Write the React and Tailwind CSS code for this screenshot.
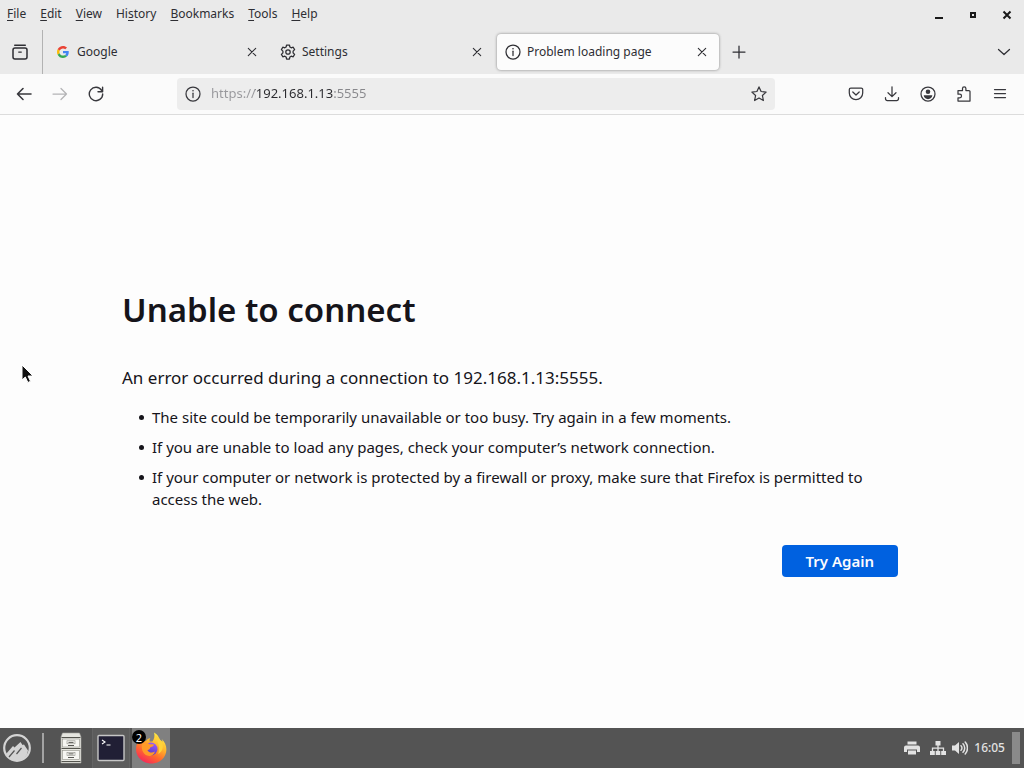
import React, { useState } from "react";

const MENUS = [
    { before: "", key: "F", after: "ile" },
    { before: "", key: "E", after: "dit" },
    { before: "", key: "V", after: "iew" },
    { before: "Hi", key: "s", after: "tory" },
    { before: "", key: "B", after: "ookmarks" },
    { before: "", key: "T", after: "ools" },
    { before: "", key: "H", after: "elp" },
];

const HINTS = [
    "The site could be temporarily unavailable or too busy. Try again in a few moments.",
    "If you are unable to load any pages, check your computer’s network connection.",
    "If your computer or network is protected by a firewall or proxy, make sure that Firefox is permitted to access the web.",
];

// Line icon on a 16px grid
function Icon({ children, className = "size-4" }) {
    return (
        <svg
            viewBox="0 0 16 16"
            className={`${className} shrink-0`}
            fill="none"
            stroke="currentColor"
            strokeWidth="1.25"
            strokeLinecap="round"
            strokeLinejoin="round"
            aria-hidden="true"
        >
            {children}
        </svg>
    );
}

const InfoIcon = () => (
    <Icon>
        <circle cx="8" cy="8" r="7" />
        <path d="M8 7.2v4.3" />
        <circle cx="8" cy="4.7" r=".8" fill="currentColor" stroke="none" />
    </Icon>
);

const GearIcon = () => (
    <Icon>
        <circle cx="8" cy="8" r="2.2" />
        <path d="M6.6 1h2.8l.5 2 1.3.8 2-.6 1.4 2.4-1.5 1.5v1.8l1.5 1.5-1.4 2.4-2-.6-1.3.8-.5 2H6.6l-.5-2-1.3-.8-2 .6-1.4-2.4 1.5-1.5V7.1L1.4 5.600l1.400-2.400 2 .600L6.100 3z" />
    </Icon>
);

const GoogleIcon = () => (
    <svg viewBox="0 0 48 48" className="size-4 shrink-0 p-0.5" aria-hidden="true">
        <path fill="#EA4335" d="M24 9.5c3.54 0 6.71 1.22 9.21 3.6l6.85-6.85C35.9 2.38 30.47 0 24 0 14.62 0 6.51 5.38 2.56 13.22l7.98 6.19C12.43 13.72 17.74 9.5 24 9.5z" />
        <path fill="#4285F4" d="M46.98 24.55c0-1.57-.15-3.09-.38-4.55H24v9.02h12.94c-.58 2.96-2.26 5.48-4.78 7.18l7.73 6c4.51-4.18 7.09-10.36 7.09-17.65z" />
        <path fill="#FBBC05" d="M10.53 28.59c-.48-1.45-.76-2.99-.76-4.59s.27-3.14.76-4.59l-7.98-6.19C.92 16.46 0 20.12 0 24s.92 7.54 2.56 10.78l7.97-6.19z" />
        <path fill="#34A853" d="M24 48c6.48 0 11.93-2.13 15.89-5.81l-7.73-6c-2.15 1.45-4.92 2.3-8.16 2.3-6.26 0-11.57-4.22-13.47-9.91l-7.98 6.19C6.51 42.62 14.62 48 24 48z" />
    </svg>
);

const CloseIcon = () => (
    <Icon>
        <path d="M4.3 4.3l7.4 7.4M11.700 4.300l-7.400 7.400" strokeWidth="1.1" />
    </Icon>
);

const TABS = [
    { title: "Google", icon: GoogleIcon },
    { title: "Settings", icon: GearIcon },
    { title: "Problem loading page", icon: InfoIcon },
];

function ToolButton({ label, disabled, children }) {
    return (
        <button
            type="button"
            aria-label={label}
            disabled={disabled}
            className="flex size-8 shrink-0 items-center justify-center rounded hover:bg-black/10 disabled:text-[#b4b4b6]"
        >
            {children}
        </button>
    );
}

function MenuBar() {
    return (
        <div className="flex h-7 items-center justify-between">
            <nav className="flex gap-3.5 pl-[7px] text-xs">
                {MENUS.map((m) => (
                    <button type="button" key={m.key + m.after}>
                        {m.before}
                        <span className="underline underline-offset-2">{m.key}</span>
                        {m.after}
                    </button>
                ))}
            </nav>
            <div className="flex gap-[18px] pr-[9px] text-[#1a1a1a]">
                <button type="button" aria-label="Minimize">
                    <svg viewBox="0 0 16 16" className="size-4">
                        <path d="M4 12h8" stroke="currentColor" strokeWidth="2" />
                    </svg>
                </button>
                <button type="button" aria-label="Maximize">
                    <svg viewBox="0 0 16 16" className="size-4">
                        <path d="M6 7h4v4H6z" fill="none" stroke="currentColor" strokeWidth="2" />
                    </svg>
                </button>
                <button type="button" aria-label="Close window">
                    <svg viewBox="0 0 16 16" className="size-4">
                        <path d="M4.500 5.500l7 7M11.500 5.500l-7 7" stroke="currentColor" strokeWidth="2" />
                    </svg>
                </button>
            </div>
        </div>
    );
}

function TabStrip() {
    const [active, setActive] = useState(2);

    return (
        <div className="flex h-[46px] items-center pt-0.5">
            <div className="flex h-11 w-[43px] shrink-0 items-center justify-center border-r border-[#b2b2b2] pr-0.5">
                <ToolButton label="Recent browsing">
                    <Icon>
                        <path d="M2.700 1.200h10.600" strokeWidth="1.400" />
                        <rect x="1" y="4" width="14" height="11" rx="2" strokeWidth="1.500" />
                        <path d="M6.700 8h2.600" />
                    </Icon>
                </ToolButton>
            </div>
            <div className="flex min-w-0 gap-[3px] pl-1">
                {TABS.map(({ title, icon: TabIcon }, i) => (
                    <div
                        key={title}
                        className={
                            i === active
                                ? "flex h-9 w-[222px] min-w-0 items-center rounded bg-[#fcfcfc] pr-[9px] pl-2 shadow-[0_0_3px_rgba(0,0,0,0.45)]"
                                : "flex h-9 w-[222px] min-w-0 items-center rounded pr-[9px] pl-2"
                        }
                    >
                        <button
                            type="button"
                            onClick={() => setActive(i)}
                            className="flex min-w-0 flex-1 items-center gap-1.5 text-left text-xs"
                        >
                            <TabIcon />
                            <span className="truncate">{title}</span>
                        </button>
                        <button type="button" aria-label={`Close ${title}`}>
                            <CloseIcon />
                        </button>
                    </div>
                ))}
            </div>
            <div className="flex flex-1 items-center justify-between pr-1 pl-1">
                <ToolButton label="New tab">
                    <Icon>
                        <path d="M8 2v12M2 8h12" />
                    </Icon>
                </ToolButton>
                <ToolButton label="List all tabs">
                    <Icon>
                        <path d="M2.500 5.500L8 10.500l5.500-5" />
                    </Icon>
                </ToolButton>
            </div>
        </div>
    );
}

function Toolbar() {
    const [url, setUrl] = useState("https://192.168.1.13:5555");

    return (
        <div className="flex h-[41px] items-center justify-between border-b border-[#dcdcdc] bg-[#fbfbfb] px-2 text-[#38383d]">
            <div className="flex gap-1">
                <ToolButton label="Back">
                    <Icon>
                        <path d="M15 8H1.500M7 2.500L1.500 8 7 13.500" strokeWidth="1.600" />
                    </Icon>
                </ToolButton>
                <ToolButton label="Forward" disabled>
                    <Icon>
                        <path d="M1 8h13.500M9 2.500L14.500 8 9 13.500" />
                    </Icon>
                </ToolButton>
                <ToolButton label="Reload">
                    <Icon>
                        <path d="M13.600 4.300A6.700 6.700 0 1 0 14.700 8M14.600 1.200v4.600H10" strokeWidth="1.400" />
                    </Icon>
                </ToolButton>
            </div>
            <form
                className="mr-[65px] ml-[65px] flex h-8 max-w-[598px] flex-1 items-center rounded bg-[#ededed] pr-2 pl-2"
                onSubmit={(e) => e.preventDefault()}
            >
                <InfoIcon />
                {/* scheme and port are dimmed, the host is dark */}
                <input
                    type="text"
                    aria-label="Address"
                    value={url}
                    onChange={(e) => setUrl(e.target.value)}
                    className="ml-2.5 min-w-0 flex-1 bg-[linear-gradient(90deg,#98989c_44px,#2a2a2e_44px,#2a2a2e_122px,#88888c_122px)] bg-clip-text text-transparent caret-black outline-none"
                />
                <button type="button" aria-label="Bookmark this page">
                    <Icon>
                        <path d="M8 .9l2.100 4.600 5 .600-3.700 3.400 1 5L8 12l-4.400 2.500 1-5L.9 6.100l5-.600z" />
                    </Icon>
                </button>
            </form>
            <div className="flex gap-1">
                <ToolButton label="Save to Pocket">
                    <Icon>
                        <path d="M2.800 2h10.400A1.500 1.500 0 0 1 14.700 3.500V7A6.700 6.700 0 0 1 1.300 7V3.500A1.500 1.500 0 0 1 2.800 2zM4.800 6L8 9l3.200-3" />
                    </Icon>
                </ToolButton>
                <ToolButton label="Downloads">
                    <Icon>
                        <path d="M8 .8v9.600M4 6.700l4 3.900 4-3.900M1.500 11.500v1.200a1.800 1.800 0 0 0 1.800 1.800h9.400a1.800 1.800 0 0 0 1.800-1.800v-1.200" />
                    </Icon>
                </ToolButton>
                <ToolButton label="Account">
                    <Icon>
                        <circle cx="8" cy="8" r="7" />
                        <circle cx="8" cy="5.700" r="2.300" fill="currentColor" stroke="none" />
                        <path d="M3.700 9.300h8.600c0 2-2 3.900-4.300 3.900S3.700 11.300 3.700 9.300z" fill="currentColor" stroke="none" />
                    </Icon>
                </ToolButton>
                <ToolButton label="Extensions">
                    <Icon>
                        <path d="M2 4.500h4.500v-2a1.700 1.700 0 0 1 3.400 0v2h3A1.100 1.100 0 0 1 14 5.600V15H2v-3.200h1.700a1.800 1.800 0 0 0 0-3.600H2z" />
                    </Icon>
                </ToolButton>
                <ToolButton label="Open application menu">
                    <Icon>
                        <path d="M2.500 3.500h11M2.500 7.500h11M2.500 11.500h11" />
                    </Icon>
                </ToolButton>
            </div>
        </div>
    );
}

function ErrorPage() {
    return (
        <main className="flex flex-1 flex-col justify-center bg-[#fdfdfd] px-12 pt-6 text-[#15141a]">
            <div className="mx-auto w-full max-w-[780px] pr-1">
                <h1 className="text-[33px] leading-10 font-semibold">Unable to connect</h1>
                <p className="mt-9 text-[17px] leading-6">
                    An error occurred during a connection to 192.168.1.13:5555.
                </p>
                <ul className="mt-4 space-y-2 pl-[17px] text-[15px] leading-[22px]">
                    {HINTS.map((hint) => (
                        <li
                            key={hint}
                            className="flex gap-2 before:mt-[9px] before:size-[5px] before:shrink-0 before:rounded-full before:bg-current before:content-['']"
                        >
                            {hint}
                        </li>
                    ))}
                </ul>
                <div className="mt-[35px] flex justify-end">
                    <button
                        type="button"
                        className="h-8 rounded bg-[#0061e0] px-6 text-[15px] font-semibold text-[#fbfbfe] hover:bg-[#0250bb]"
                    >
                        Try Again
                    </button>
                </div>
            </div>
        </main>
    );
}

const CinnamonLogo = () => (
    <svg viewBox="0 0 30 30" className="size-[30px]" aria-hidden="true">
        <circle cx="15" cy="15" r="12.800" fill="none" stroke="#d4d4d4" strokeWidth="2.200" />
        <path fill="#d4d4d4" d="M4 21l7-8 1.500 1.500L18.500 9l2 3 1.500-.500 4 6-1 4a12 12 0 0 1-19.500 2z" />
        <path d="M7 24l5.500-6.500M14.500 21l5-6" stroke="#555" strokeWidth="1.200" />
    </svg>
);

const FilesIcon = () => (
    <svg viewBox="0 0 24 32" className="h-8 w-6" aria-hidden="true">
        <path d="M3.500 1h17l1.500 4v26H2V5z" fill="#e6e6e0" stroke="#a5a5a0" strokeWidth=".6" />
        <path d="M2.500 5.500h19M2.500 16.500h19M2.500 29.500h19" stroke="#55554f" strokeWidth="1.200" />
        <g fill="#f6f6f2" stroke="#8f8f88" strokeWidth=".6">
            <rect x="3.500" y="7" width="17" height="8" />
            <rect x="3.500" y="18.500" width="17" height="9" />
            <rect x="8" y="8.800" width="8" height="3" />
            <rect x="8" y="20.300" width="8" height="3" />
        </g>
        <path d="M9.500 10.400h5M9.500 21.900h5M9 13.500h6M9 25.500h6" stroke="#44443f" strokeWidth=".9" />
    </svg>
);

const TerminalIcon = () => (
    <svg viewBox="0 0 28 28" className="size-7" aria-hidden="true">
        <rect x="1" y="1.500" width="26" height="25" rx="1" fill="#211f35" stroke="#c6c6c6" strokeWidth="1.400" />
        <path d="M5 6l3 2-3 2M9.500 11h4" fill="none" stroke="#fff" strokeWidth="1.100" />
    </svg>
);

const FirefoxIcon = () => (
    <svg viewBox="0 0 32 32" className="size-8" aria-hidden="true">
        <defs>
            <linearGradient id="flame" x1=".8" y1=".05" x2=".25" y2="1">
                <stop offset="0" stopColor="#fff14a" />
                <stop offset=".35" stopColor="#ffb52b" />
                <stop offset=".65" stopColor="#ff6a2c" />
                <stop offset="1" stopColor="#f5215f" />
            </linearGradient>
            <linearGradient id="globe" x1=".7" y1="0" x2=".3" y2="1">
                <stop offset="0" stopColor="#9b5cff" />
                <stop offset="1" stopColor="#5138b8" />
            </linearGradient>
        </defs>
        <path
            fill="url(#flame)"
            d="M19 .500c3.500 1.700 5 4.700 5.900 7.500 1.100.300 2 .900 2.700 1.700-.100-1-.500-2-.900-2.800 3 2.600 4.700 6.600 4.700 10.600C31.400 25.400 24.700 31.500 16.500 31.500S1 25.400 1 17.200c0-4.200 1.500-7.600 4.300-10 .100 1.200.400 2 .800 2.700 1.400-.900 3-1.200 4.700-.800 1.200-1.800 2.700-2.800 4.500-3.200-.900 1.500-1 2.600-.500 3.600h2.600c1.900-2.400 2.600-5.600 1.600-9z"
        />
        <circle cx="16" cy="17" r="6.500" fill="url(#globe)" />
        <path
            fill="#ff9a28"
            d="M7.500 11.500c2.800-1.400 5.500-1 7.200.700h4c.500 1.300-.800 2.300-3.300 3-.300 1.700-1.500 2.300-3 3 1.500 2.500 5 3 7.500 1.200-.800 3.600-4.300 5.300-7.800 4.100-4.600-1.600-6.400-7.800-4.600-12z"
        />
        <path fill="#ffd33a" d="M20.500 3.500c1 5 5.500 10 2.800 18.500 5.200-2.700 6-9.600 2.200-13.700C24.500 6.500 22 4 20.500 3.500z" />
    </svg>
);

function Taskbar() {
    return (
        <footer className="flex h-10 items-stretch justify-between bg-[#545454] text-[#e2e2e2]">
            <div className="flex items-center">
                <button type="button" aria-label="Menu" className="pl-0.5">
                    <CinnamonLogo />
                </button>
                <span className="ml-2.5 h-[30px] w-0.5 bg-[#a3a3a3]" />
                <button type="button" aria-label="Files" className="ml-[7px] flex h-10 w-[39px] items-center justify-center">
                    <FilesIcon />
                </button>
                <button type="button" aria-label="Terminal" className="ml-0.5 flex h-10 w-[38px] items-center justify-center border-x border-[#646464] bg-[#5c5c5c]">
                    <TerminalIcon />
                </button>
                <button type="button" aria-label="Firefox" className="relative ml-0.5 flex h-10 w-[38px] items-center justify-center bg-[#808080]">
                    <FirefoxIcon />
                    <span className="absolute top-0.5 left-0 flex size-3.5 items-center justify-center rounded-full bg-black text-[11px] leading-none text-white">
                        2
                    </span>
                </button>
            </div>
            <div className="flex items-center pr-1">
                <svg viewBox="0 0 16 16" className="size-4" fill="currentColor" aria-hidden="true">
                    <path d="M3.500 1.500h9v3h-9zM2 5.500h12a2 2 0 0 1 2 2V12h-3v-2.500H3V12H0V7.500a2 2 0 0 1 2-2zM4 10.500h8v4H4z" />
                </svg>
                <svg viewBox="0 0 16 16" className="ml-2.5 size-4" fill="currentColor" aria-hidden="true">
                    <path d="M5.500 1h5v4.500h-5zM0 11h4.800v4H0zM5.700 11h4.600v4H5.700zM11.200 11H16v4h-4.800z" />
                    <path d="M8 5v6M2.500 11V8.200h11V11" fill="none" stroke="currentColor" strokeWidth="1.300" />
                </svg>
                <svg viewBox="0 0 16 16" className="ml-1.5 size-4" fill="none" stroke="currentColor" strokeWidth="1.500" strokeLinecap="round" aria-hidden="true">
                    <path d="M0 5.500h3L7 2v12l-4-3.500H0z" fill="currentColor" stroke="none" />
                    <path d="M9 5.800a3 3 0 0 1 0 4.400M11 3.800a6 6 0 0 1 0 8.400M13.200 2a9 9 0 0 1 0 12" />
                </svg>
                <time className="ml-1.5 text-xs font-medium">16:05</time>
                <span className="ml-[7px] h-8 w-2 bg-[#8a8a8a]" />
            </div>
        </footer>
    );
}

export default function App() {
    return (
        <div className="relative flex min-h-screen flex-col font-['Noto_Sans',sans-serif] text-[13px] text-[#2e2e33]">
            <header className="bg-[#eaeaea]">
                <MenuBar />
                <TabStrip />
                <Toolbar />
            </header>
            <ErrorPage />
            <Taskbar />
            {/* mouse pointer */}
            <svg viewBox="0 0 13 20" className="pointer-events-none absolute top-[364px] left-[21px] h-5 w-[13px]" aria-hidden="true">
                <path d="M1 1v15l3.300-3 2.600 5.500 2.600-1.200L7 12h5z" fill="#111" stroke="#fff" strokeWidth="1" />
            </svg>
        </div>
    );
}
